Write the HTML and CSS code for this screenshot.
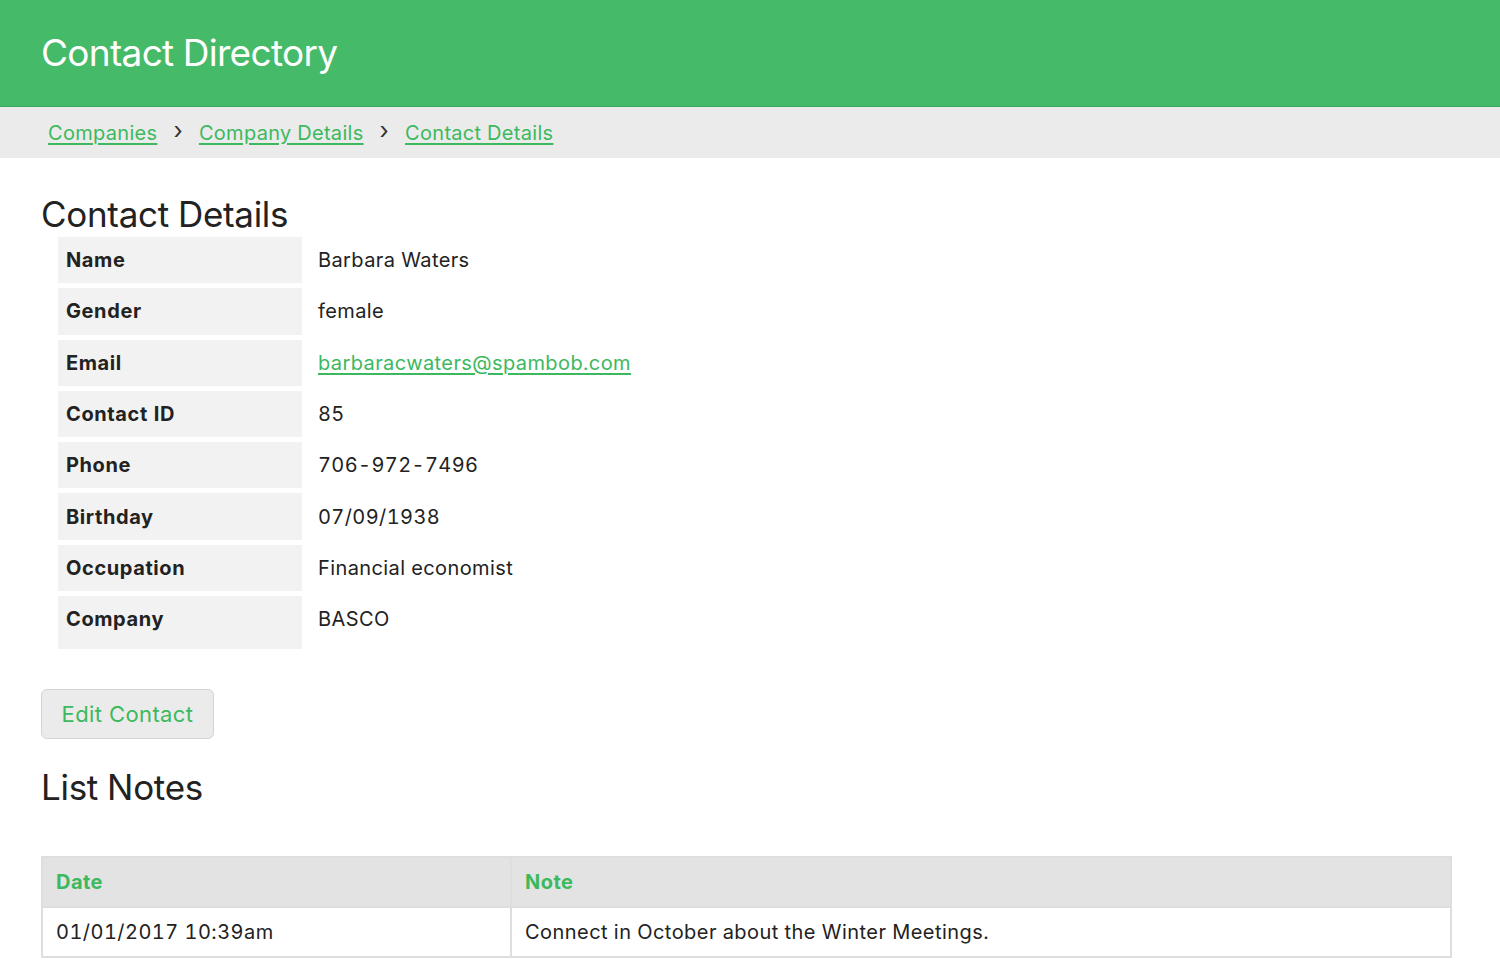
FILE: index.html
```html
<!DOCTYPE html>
<html>
<head>
<meta charset="utf-8">
<title>Contact Directory</title>
<link rel="stylesheet" href="styles.css">
</head>
<body>
<header class="topbar">
  <h1 class="brand">Contact Directory</h1>
</header>
<nav class="crumbs">
  <a href="#">Companies</a>
  <span class="sep">&#8250;</span>
  <a href="#">Company Details</a>
  <span class="sep">&#8250;</span>
  <a href="#">Contact Details</a>
</nav>
<main class="content">
  <h2 class="section-title">Contact Details</h2>
  <table class="details">
    <tr><th>Name</th><td>Barbara Waters</td></tr>
    <tr><th>Gender</th><td>female</td></tr>
    <tr><th>Email</th><td><a href="#">barbaracwaters@spambob.com</a></td></tr>
    <tr><th>Contact ID</th><td>85</td></tr>
    <tr><th>Phone</th><td>706-972-7496</td></tr>
    <tr><th>Birthday</th><td>07/09/1938</td></tr>
    <tr><th>Occupation</th><td>Financial economist</td></tr>
    <tr class="last"><th>Company</th><td>BASCO</td></tr>
  </table>
  <button class="btn">Edit Contact</button>
  <h2 class="section-title notes-title">List Notes</h2>
  <table class="notes">
    <thead>
      <tr><th class="col-date">Date</th><th>Note</th></tr>
    </thead>
    <tbody>
      <tr><td>01/01/2017 10:39am</td><td>Connect in October about the Winter Meetings.</td></tr>
    </tbody>
  </table>
</main>
</body>
</html>
```

FILE: styles.css
```css
* { box-sizing: border-box; }
html, body {
  margin: 0;
  padding: 0;
  background: #ffffff;
  color: #222222;
  font-family: "Inter", "Noto Sans", sans-serif;
  font-variant-numeric: tabular-nums;
}
.topbar {
  background: #45ba68;
  height: 107px;
  border-bottom: 1px solid #3aa95b;
  display: flex;
  align-items: center;
  padding: 0 41px;
}
.brand {
  margin: 0;
  color: #ffffff;
  font-size: 37px;
  font-weight: 400;
  letter-spacing: -0.7px;
  position: relative;
  top: -1px;
}
.crumbs {
  background: #ebebeb;
  height: 51px;
  display: flex;
  align-items: center;
  padding: 0 48px;
  font-size: 20px;
  letter-spacing: 0.3px;
}
.crumbs a {
  color: #3cb95e;
  text-decoration: underline;
  text-underline-offset: 3px;
}
.crumbs .sep {
  color: #333;
  margin: 0 16px;
  font-size: 24px;
  position: relative;
  top: -2px;
}
.content {
  padding: 0 41px;
}
.section-title {
  margin: 0;
  font-size: 35px;
  font-weight: 400;
  letter-spacing: -0.3px;
  line-height: 44px;
  padding-top: 34px;
  color: #222;
}
.details {
  border-collapse: separate;
  border-spacing: 0 5px;
  margin: -4px 0 0 17px;
  font-size: 20px;
  letter-spacing: 0.4px;
}
.details th {
  background: #f2f2f2;
  width: 244px;
  height: 46.3px;
  text-align: left;
  font-weight: 700;
  padding: 0 8px;
  letter-spacing: 0.6px;
}
.details td {
  padding: 0 16px;
  height: 46.3px;
}
.details tr.last th, .details tr.last td {
  height: 53px;
  vertical-align: top;
  padding-top: 11px;
}
.details a {
  color: #3cb95e;
  text-underline-offset: 3px;
}
.btn {
  display: block;
  margin-top: 35px;
  width: 173px;
  height: 50px;
  background: #ebebeb;
  border: 1px solid #d4d4d4;
  border-radius: 6px;
  color: #3cb95e;
  font-family: inherit;
  font-size: 22px;
  letter-spacing: 0.4px;
  padding: 0;
}
.notes-title {
  padding-top: 26px;
}
.notes {
  margin-top: 47px;
  width: 1411px;
  border-collapse: collapse;
  font-size: 20px;
  letter-spacing: 0.45px;
  border: 2px solid #dedede;
}
.notes th, .notes td {
  border: 2px solid #dedede;
  height: 50px;
  padding: 0 13px;
  text-align: left;
}
.notes th {
  background: #e3e3e3;
  color: #3cb95e;
  font-weight: 700;
}
.notes .col-date {
  width: 469px;
}
```
